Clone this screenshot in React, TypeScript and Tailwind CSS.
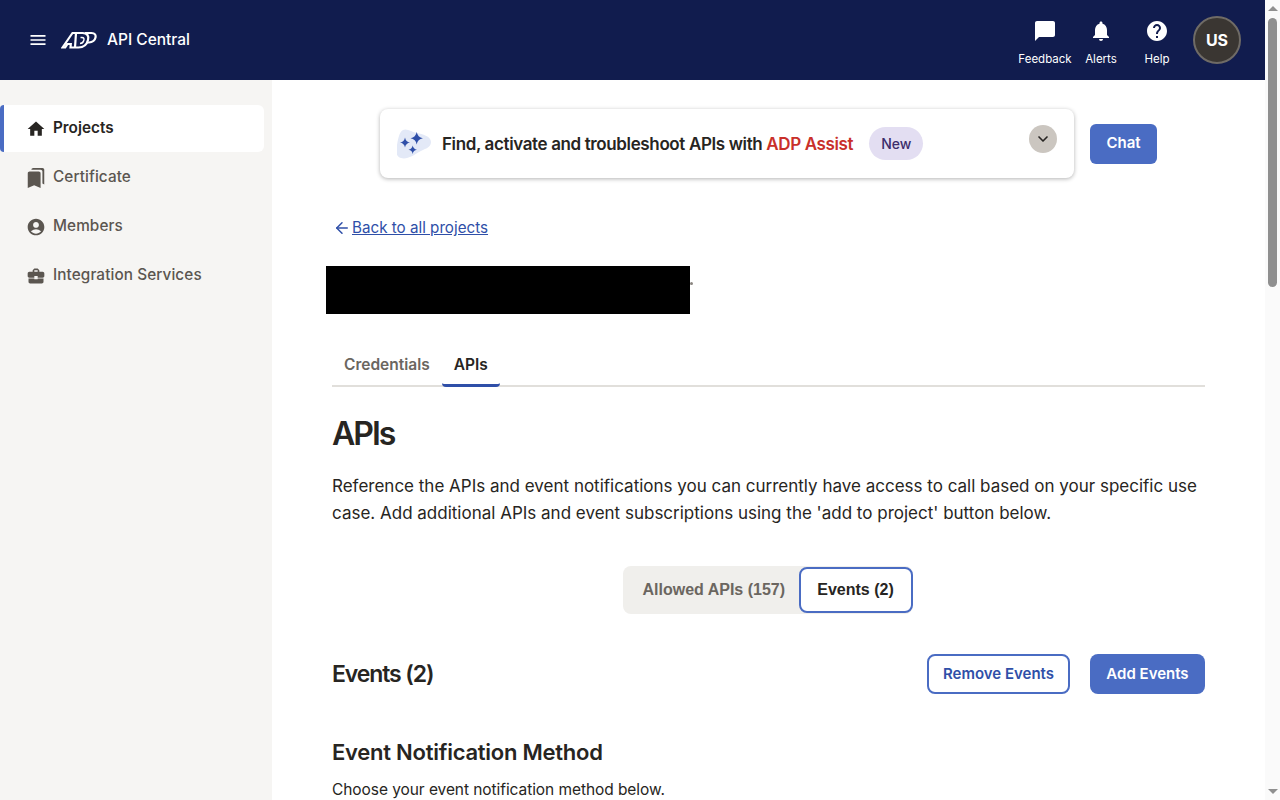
import { ArrowLeft, ChevronDown } from "lucide-react";
import {
  MdBookmarks,
  MdAccountCircle,
  MdBusinessCenter,
  MdChatBubble,
  MdHelp,
  MdHome,
  MdMenu,
  MdNotifications,
} from "react-icons/md";

const navItems = [
  { label: "Certificate", icon: MdBookmarks, size: "h-[22px] w-[22px] -ml-[1px] mr-[-1px]" },
  { label: "Members", icon: MdAccountCircle, size: "h-[20px] w-[20px]" },
  { label: "Integration Services", icon: MdBusinessCenter, size: "h-[20px] w-[20px]" },
];

const headerActions = [
  { label: "Feedback", icon: MdChatBubble, width: "w-[66px]" },
  { label: "Alerts", icon: MdNotifications, width: "w-[46px]" },
  { label: "Help", icon: MdHelp, width: "w-[66px]" },
];

function AdpLogo() {
  return (
    <svg width="36" height="18" viewBox="0 0 36 18" fill="none" stroke="#fff" strokeWidth="2.200">
      <path d="M1.500 16.500 11.500 2h3.500l-1 14.500H9.500l.3-3.500H6.500l-2.300 3.500z" />
      <path d="M16 2h5.500c5 0 6.500 3 5.500 7s-4 7.500-9.500 7.500H15" />
      <path d="M24 2h6.500c3.500 0 4.500 2 4 4.500s-3 5-6.500 5h-2" />
      <path d="M19.500 6.500h1.500c2 0 2.300 1.200 1.800 3s-1.800 3-3.800 3" strokeWidth="1.400" />
    </svg>
  );
}

// four point star, fat enough to read at this size
function star(cx: number, cy: number, r: number) {
  const k = r * 0.15;
  return `M${cx} ${cy - r}Q${cx + k} ${cy - k} ${cx + r} ${cy}Q${cx + k} ${cy + k} ${cx} ${cy + r}Q${cx - k} ${cy + k} ${cx - r} ${cy}Q${cx - k} ${cy - k} ${cx} ${cy - r}z`;
}

function Sparkles() {
  return (
    <svg width="36" height="34" viewBox="0 0 36 34">
      <path d="M6 3c4-2 9 2 14 3 5 1 14 3 14 9s-7 7-12 10-12 8-18 6-5-8-4-13S2 5 6 3z" fill="#e3e9f7" />
      <g fill="#2f4fa8">
        <path d={star(19.700, 11.200, 6.200)} />
        <path d={star(8, 15.500, 5)} />
        <path d={star(15.700, 22.800, 4.200)} />
      </g>
    </svg>
  );
}

export default function App() {
  return (
    <div className="flex h-screen overflow-hidden bg-white font-['Inter',sans-serif] text-[#272522] antialiased">
      <div className="flex w-[1265px] flex-col">
        <header className="flex h-20 shrink-0 items-center bg-[#111c4e] pl-[28px] pr-[24px] text-white">
          <MdMenu className="h-5 w-5" />
          <div className="ml-[13px]">
            <AdpLogo />
          </div>
          <span className="ml-[10px] text-[15.500px] font-medium">API Central</span>
          <div className="ml-auto flex items-center">
            {headerActions.map((a) => (
              <div key={a.label} className={`flex flex-col items-center pt-[5px] ${a.width}`}>
                <a.icon className="h-6 w-6" />
                <span className="mt-[8px] text-[11.500px] leading-[16px]">{a.label}</span>
              </div>
            ))}
            <div className="ml-[3px] flex h-12 w-12 items-center justify-center rounded-full border-2 border-[#6f6b66] bg-[#3a3632] text-[16px] font-bold">
              US
            </div>
          </div>
        </header>

        <div className="flex min-h-0 flex-1">
          <aside className="w-[272px] shrink-0 bg-[#f6f5f3] pt-[25px]">
            <div className="mr-2 flex h-[47px] items-center rounded-r-md rounded-l-sm border-l-4 border-[#4a6cc3] bg-white pl-[22px] text-[15.300px] font-semibold">
              <MdHome className="h-[20px] w-[20px]" />
              <span className="ml-[7px]">Projects</span>
            </div>
            {navItems.map((item) => (
              <div
                key={item.label}
                className="mt-[2px] flex h-[47px] items-center pl-[26px] text-[15.300px] font-medium tracking-[0.1px] text-[#5b5650]"
              >
                <item.icon className={item.size} />
                <span className="ml-[7px]">{item.label}</span>
              </div>
            ))}
          </aside>

          <main className="min-w-0 flex-1 overflow-hidden pl-[60px] pr-[60px]">
            <div className="mt-[29px] flex items-center pl-[48px]">
              <div className="relative flex h-[69px] w-[694px] items-center rounded-lg bg-white pl-[17px] shadow-[0_1px_4px_rgba(0,0,0,0.3)]">
                <Sparkles />
                <span className="ml-[9px] mt-[2px] text-[17px] font-semibold tracking-[-0.37px]">
                  Find, activate and troubleshoot APIs with <span className="text-[#c9302a]">ADP Assist</span>
                </span>
                <span className="ml-4 rounded-full bg-[#e3def2] px-3 py-[6px] text-[14px] font-medium text-[#3c2d6b]">
                  New
                </span>
                <span className="absolute right-[17px] top-[16px] flex h-7 w-7 items-center justify-center rounded-full bg-[#cbc6c0]">
                  <ChevronDown className="h-4 w-4" strokeWidth={2.5} />
                </span>
              </div>
              <button className="ml-4 h-10 w-[67px] rounded-md bg-[#4a6cc3] text-[15px] font-semibold text-white">
                Chat
              </button>
            </div>

            <a className="mt-[39px] flex items-center pl-[1px] text-[15.200px] text-[#2f4fa8]">
              <ArrowLeft className="h-[18px] w-[18px]" />
              <span className="ml-[1px] underline">Back to all projects</span>
            </a>

            <div className="-ml-[6px] mt-[26px] flex items-center">
              <div className="h-12 w-[364px] bg-black" />
              <div className="mb-[12px] h-[3px] w-[3px] rounded-full bg-[#8a8580]" />
            </div>

            <div className="mt-[31px] flex h-[42px] border-b-2 border-[#e1dfdb] text-[15.500px] font-semibold">
              <div className="px-3 pt-[8px] text-[#6b6660]">Credentials</div>
              <div className="-mb-[2px] rounded-b-sm border-b-[3px] border-[#2f4fa8] px-3 pt-[8px]">APIs</div>
            </div>

            <h1 className="mt-[25px] text-[32px] font-semibold leading-[44px] tracking-[-2px]">APIs</h1>
            <p className="mt-[17px] text-[17px] leading-[27px]">
              Reference the APIs and event notifications you can currently have access to call based on your specific
              use case. Add additional APIs and event subscriptions using the 'add to project' button below.
            </p>

            <div className="mt-[39px] flex justify-center pr-[2px]">
              <div className="flex h-12 items-center rounded-lg bg-[#f0efec] [font-family:Liberation_Sans,sans-serif] text-[16px] font-bold">
                <span className="w-[176px] pl-[20px] text-[#6b6660]">Allowed APIs (157)</span>
                <span className="flex h-[46px] w-[114px] items-center justify-center rounded-lg border-2 border-[#4a6cc3] bg-white">
                  Events (2)
                </span>
              </div>
            </div>

            <div className="mt-[40px] flex h-10 items-center">
              <h2 className="text-[23px] font-semibold tracking-[-1.1px]">Events (2)</h2>
              <div className="ml-auto flex gap-5 text-[15px] font-semibold">
                <button className="h-10 w-[143px] rounded-lg border-2 border-[#4a6cc3] text-[#2f4fa8]">
                  Remove Events
                </button>
                <button className="h-10 w-[115px] rounded-lg bg-[#4a6cc3] text-white">Add Events</button>
              </div>
            </div>

            <h2 className="mt-[41px] text-[22px] font-semibold leading-[34px] tracking-[-0.25px]">
              Event Notification Method
            </h2>
            <p className="mt-[9px] text-[15.500px] leading-[24px] tracking-[-0.07px]">
              Choose your event notification method below.
            </p>
          </main>
        </div>
      </div>

      <div className="flex w-[15px] shrink-0 flex-col items-center bg-[#fafafa]">
        <div className="mt-[6px] h-0 w-0 border-x-[5px] border-b-[5px] border-x-transparent border-b-[#8f8f8f]" />
        <div className="mt-[7px] h-[269px] w-[9px] rounded-full bg-[#8f8f8f]" />
        <div className="mb-[6px] mt-auto h-0 w-0 border-x-[5px] border-t-[5px] border-x-transparent border-t-[#8f8f8f]" />
      </div>
    </div>
  );
}
